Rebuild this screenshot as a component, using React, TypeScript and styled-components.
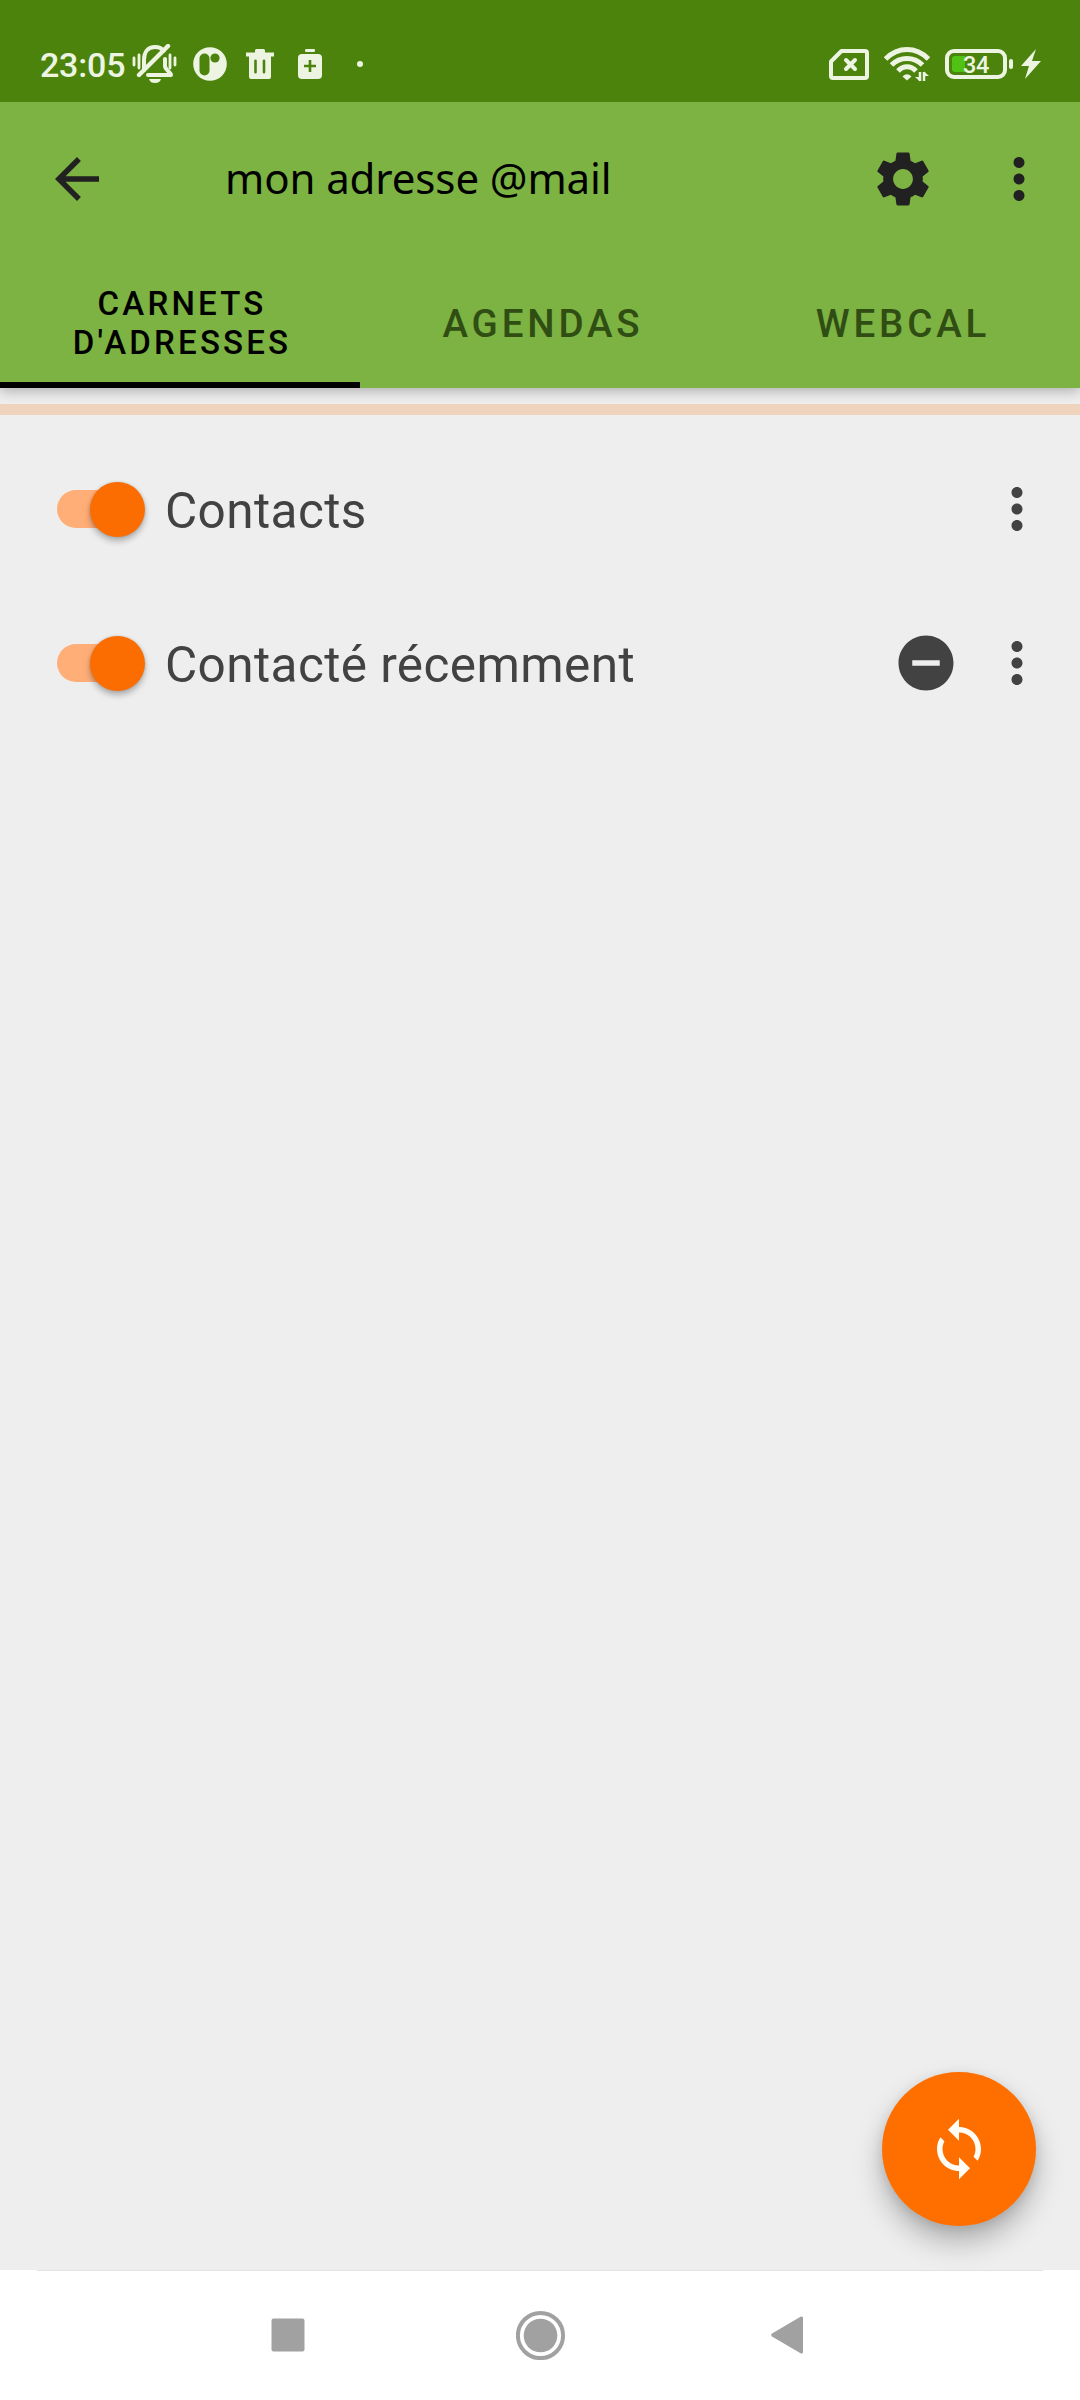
import React from "react";
import styled, { createGlobalStyle } from "styled-components";
import { MdArrowBack, MdMoreVert, MdRemoveCircle, MdSettings, MdSync } from "react-icons/md";

const GlobalStyle = createGlobalStyle`
  *, *::before, *::after { box-sizing: border-box; }
  body { margin: 0; font-family: Roboto, "Noto Sans", sans-serif; background: #eeeeee; }
  svg { display: block; flex: none; }
  button { border: 0; padding: 0; background: none; color: inherit; font: inherit; }
`;

const Screen = styled.div`
  width: 1080px;
  height: 2400px;
  display: flex;
  flex-direction: column;
  background: #eeeeee;
  overflow: hidden;
`;

const StatusBar = styled.header`
  position: relative;
  z-index: 1;
  height: 102px;
  flex: none;
  display: flex;
  justify-content: space-between;
  padding: 26px 39px 0 40px;
  background: #4c830d;
  color: #edf5e2;
`;

const StatusGroup = styled.div`
  height: 76px;
  display: flex;
  align-items: center;
`;

const Clock = styled.span`
  width: 91px;
  font-size: 34px;
  font-weight: 500;
  letter-spacing: -0.2px;
  line-height: 40px;
  white-space: nowrap;
  padding-top: 1px;
`;

const StatusIcon = styled.svg<{ $gap?: number }>`
  margin-left: ${(p) => p.$gap ?? 0}px;
`;

const Battery = styled.div`
  width: 62px;
  height: 30px;
  margin-left: 15px;
  padding: 0 3px 0 3px;
  border: 4px solid #edf5e2;
  border-radius: 9px;
  display: flex;
  align-items: center;
`;

const BatteryLevel = styled.span`
  width: 13px;
  height: 16px;
  border-radius: 3px 0 0 3px;
  background: #50c214;
`;

const BatteryText = styled.span`
  font-size: 23.5px;
  line-height: 24px;
  font-weight: 500;
  letter-spacing: -0.4px;
  margin-left: -2px;
  padding-top: 1px;
`;

const BatteryNub = styled.span`
  width: 4px;
  height: 10px;
  margin-left: 2px;
  border-radius: 2px;
  background: #edf5e2;
`;

const AppBar = styled.div`
  height: 286px;
  flex: none;
  background: #7cb342;
  box-shadow: 0 3px 12px rgba(0, 0, 0, 0.27);
`;

const Toolbar = styled.div`
  height: 154px;
  display: flex;
  align-items: center;
  padding: 0 28px 0 44px;
  color: #212121;
`;

const Title = styled.h1`
  flex: 1;
  margin: 0 0 0 115px;
  padding-bottom: 2px;
  font: 400 42px/60px "Noto Sans", sans-serif;
  letter-spacing: -0.1px;
  color: #000;
  white-space: nowrap;
`;

const IconButton = styled.button<{ $gap?: number }>`
  width: 66px;
  height: 66px;
  margin-left: ${(p) => p.$gap ?? 0}px;
`;

const Tabs = styled.nav`
  height: 132px;
  display: grid;
  grid-template-columns: repeat(3, 360px);
`;

const Tab = styled.button<{ $active?: boolean }>`
  display: flex;
  align-items: center;
  justify-content: center;
  text-align: center;
  padding: ${(p) => (p.$active ? "8px 58px 0 62px" : "8px 0 0 6px")};
  border-bottom: 6px solid ${(p) => (p.$active ? "#000" : "transparent")};
  color: ${(p) => (p.$active ? "#000" : "#304d14")};
  font-size: ${(p) => (p.$active ? 33 : 38.5)}px;
  line-height: ${(p) => (p.$active ? 39 : 45)}px;
  letter-spacing: ${(p) => (p.$active ? 3.2 : 3.85)}px;
  font-weight: 500;
`;

const Stripe = styled.div`
  height: 11px;
  flex: none;
  margin-top: 16px;
  background: #f0d3bd;
`;

const List = styled.ul`
  margin: 17px 0 0;
  padding: 0;
  list-style: none;
  color: #424242;
`;

const Row = styled.li`
  height: 154px;
  display: flex;
  align-items: center;
  padding: 0 30px 0 57px;
`;

const Switch = styled.span`
  width: 88px;
  height: 56px;
  flex: none;
  display: flex;
  align-items: center;
`;

const Track = styled.span`
  width: 77px;
  height: 38px;
  flex: none;
  border-radius: 19px;
  background: #ffae77;
`;

const Thumb = styled.span`
  width: 55px;
  height: 55px;
  flex: none;
  margin-left: -44.5px;
  border-radius: 50%;
  background: #fb6d00;
  box-shadow: 0 4px 6px rgba(0, 0, 0, 0.28), 0 0 3px rgba(0, 0, 0, 0.12);
`;

const RowLabel = styled.span`
  flex: 1;
  margin-left: 20px;
  padding-top: 4px;
  font-size: 49.5px;
  line-height: 58px;
  letter-spacing: 0.4px;
  white-space: nowrap;
`;

const Content = styled.main`
  flex: 1;
  display: flex;
  flex-direction: column;
`;

const Fab = styled.button`
  width: 154px;
  height: 154px;
  margin: auto 44px 44px auto;
  display: grid;
  place-items: center;
  border-radius: 50%;
  background: #ff6f00;
  color: #fffdf5;
  box-shadow: 0 16px 28px rgba(0, 0, 0, 0.26), 0 3px 12px rgba(0, 0, 0, 0.1);
`;

const NavBar = styled.footer`
  position: relative;
  height: 130px;
  flex: none;
  display: flex;
  align-items: center;
  background: linear-gradient(#e2e2e2, #e2e2e2) center top / 1006px 1px no-repeat, #fff;
  padding: 0 0 0 271px;
`;

const NavIcon = styled.svg<{ $gap?: number }>`
  margin-left: ${(p) => p.$gap ?? 0}px;
`;

const BellOff = () => (
  <StatusIcon width="46" height="40" viewBox="0 0 46 40" fill="none" stroke="currentColor" strokeLinecap="round">
    <path d="M13 26V16C13 8 17 3 24 3c4 0 7 1.500 8.500 4M34 15v7c0 4 6 6 6 9H17" strokeWidth="4" strokeLinejoin="round" />
    <path d="M8 31 37 2" strokeWidth="4.400" />
    <path d="M3 14v7M8 11v13M39 11v13M44 14v7" strokeWidth="2.800" />
    <path d="M18 35h12c-1 3-3 4-6 4s-5-1-6-4z" fill="currentColor" stroke="none" />
  </StatusIcon>
);

const rows = [
  { label: "Contacts", readOnly: false },
  { label: "Contacté récemment", readOnly: true },
];

export default function App() {
  return (
    <Screen>
      <GlobalStyle />
      <StatusBar>
        <StatusGroup>
          <Clock>23:05</Clock>
          <BellOff />
          <StatusIcon $gap={16} width="34" height="34" viewBox="0 0 34 34">
            <circle cx="17" cy="17" r="16.800" fill="currentColor" />
            <rect x="6.500" y="6.500" width="10" height="22" rx="5" fill="#4c830d" />
            <circle cx="22" cy="11" r="4.600" fill="#4c830d" />
          </StatusIcon>
          <StatusIcon $gap={19} width="28" height="30" viewBox="0 0 28 30" fill="currentColor">
            <path d="M0 3.500h9V1.500Q9 0 10.500 0h7Q19 0 19 1.500v2h9v4H0z" />
            <path fillRule="evenodd" d="M3 7h22v21q0 2-2 2H5q-2 0-2-2zM9.500 10.500q-1.300 0-1.300 1.300v11.400q0 1.300 1.300 1.300t1.300-1.300V11.800q0-1.300-1.300-1.300zM18 10.500q-1.300 0-1.300 1.300v11.400q0 1.300 1.300 1.300t1.300-1.300V11.800q0-1.300-1.300-1.300z" />
          </StatusIcon>
          <StatusIcon $gap={24} width="24" height="30" viewBox="0 0 24 30">
            <rect x="7" y="0" width="10" height="3" rx="1.200" fill="currentColor" />
            <rect x="0" y="5" width="24" height="25" rx="4" fill="currentColor" />
            <path d="M12 11v12M6 17h12" stroke="#4c830d" strokeWidth="2.600" />
          </StatusIcon>
          <StatusIcon $gap={35} width="6" height="6" viewBox="0 0 6 6">
            <circle cx="3" cy="3" r="3" fill="currentColor" />
          </StatusIcon>
        </StatusGroup>
        <StatusGroup>
          <StatusIcon width="40" height="31" viewBox="0 0 40 31" fill="none" stroke="currentColor" strokeLinecap="round" strokeLinejoin="round">
            <path d="M12.500 2H36q2 0 2 2v23q0 2-2 2H4q-2 0-2-2V12.500z" strokeWidth="4" />
            <path d="m17 11 9 9m0-9-9 9" strokeWidth="4" />
          </StatusIcon>
          <StatusIcon $gap={15} width="46" height="36" viewBox="0 0 46 36" fill="none" stroke="currentColor" strokeWidth="5">
            <path d="M1.500 13Q11 3.500 23 3.500T44.500 13M7.500 19Q14 12.500 23 12.500T38.500 19M14 25Q18 20.800 23 20.800T32 25" />
            <path d="M18.500 30.500Q23 26 27.500 30.500L23 34.500z" fill="currentColor" stroke="none" />
            <path d="M36 26v9M40 35v-9" strokeWidth="2.500" />
            <path d="M31 31h5v4.500zM45 30h-5v-4.500z" fill="currentColor" stroke="none" />
          </StatusIcon>
          <Battery>
            <BatteryLevel />
            <BatteryText>34</BatteryText>
          </Battery>
          <BatteryNub />
          <StatusIcon $gap={8} width="20" height="30" viewBox="0 0 20 30">
            <path d="M15 0 0 17h8L4 30 20 12h-9z" fill="currentColor" />
          </StatusIcon>
        </StatusGroup>
      </StatusBar>

      <AppBar>
        <Toolbar>
          <IconButton aria-label="Retour"><MdArrowBack size={66} /></IconButton>
          <Title>mon adresse @mail</Title>
          <IconButton aria-label="Paramètres"><MdSettings size={66} /></IconButton>
          <IconButton aria-label="Menu" $gap={50}><MdMoreVert size={66} /></IconButton>
        </Toolbar>
        <Tabs>
          <Tab $active>CARNETS D'ADRESSES</Tab>
          <Tab>AGENDAS</Tab>
          <Tab>WEBCAL</Tab>
        </Tabs>
      </AppBar>

      <Content>
        <Stripe />
        <List>
          {rows.map((row) => (
            <Row key={row.label}>
              <Switch>
                <Track />
                <Thumb />
              </Switch>
              <RowLabel>{row.label}</RowLabel>
              {row.readOnly && <MdRemoveCircle size={66} />}
              <IconButton aria-label="Menu" $gap={25}><MdMoreVert size={66} /></IconButton>
            </Row>
          ))}
        </List>
        <Fab aria-label="Synchroniser"><MdSync size={66} /></Fab>
      </Content>

      <NavBar>
        <NavIcon width="34" height="34" viewBox="0 0 34 34"><rect x=".5" y=".5" width="33" height="33" rx="2" fill="#a1a1a1" /></NavIcon>
        <NavIcon $gap={211} width="50" height="50" viewBox="0 0 50 50">
          <circle cx="24.500" cy="25.500" r="22.600" fill="none" stroke="#a1a1a1" strokeWidth="4" />
          <circle cx="24.500" cy="25.500" r="16.800" fill="#a1a1a1" />
        </NavIcon>
        <NavIcon $gap={205} width="32" height="38" viewBox="0 0 32 38"><path d="M1 17.500 29.500.800Q32-.400 32 2v34q0 2.400-2.500 1.200L1 20.500q-1.600-1.500 0-3z" fill="#a1a1a1" /></NavIcon>
      </NavBar>
    </Screen>
  );
}
